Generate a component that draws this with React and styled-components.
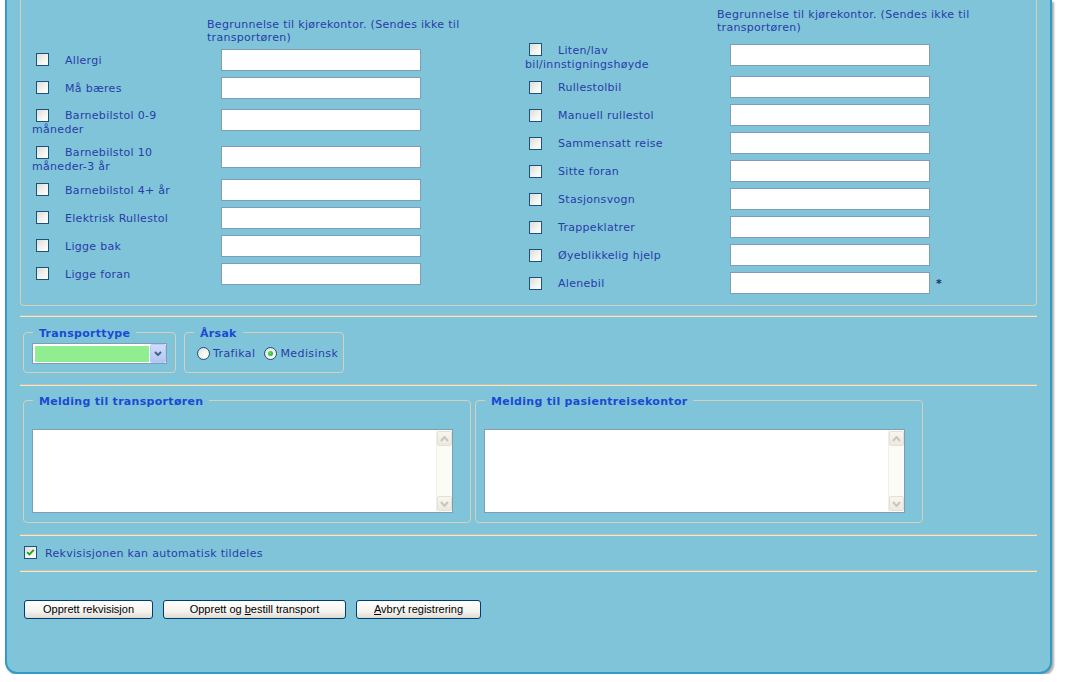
import React from 'react';
import styled, { createGlobalStyle } from 'styled-components';

const Global = createGlobalStyle`
  html, body { margin: 0; padding: 0; background: #ffffff; }
  body { font-family: "DejaVu Sans", Verdana, sans-serif; font-size: 11px; letter-spacing: 0.3px; color: #283ca8; }
`;

const Panel = styled.div`
  box-sizing: border-box;
  margin-left: 5px;
  width: 1047px;
  height: 674px;
  background: #80c4da;
  border: 2px solid #2e9cc6;
  border-top: none;
  border-radius: 0 0 12px 12px;
  box-shadow: 2px 2px 2px rgba(70, 70, 70, 0.45);
  padding: 0 13px;
  display: flex;
  flex-direction: column;
`;

const CriteriaBox = styled.div`
  box-sizing: border-box;
  height: 306px;
  border: 1px solid #d3d0bc;
  border-top: none;
  border-radius: 0 0 4px 4px;
  padding: 8px 0 8px 11px;
  display: flex;
  align-items: center;
`;

const Column = styled.div`
  width: ${p => (p.$w ? `${p.$w}px` : 'auto')};
  flex: ${p => (p.$w ? 'none' : '1')};
  display: grid;
  grid-template-columns: ${p => p.$labelW}px 1fr;
`;

const ColumnHeader = styled.div`
  grid-column: 2;
  height: 28px;
  max-width: 275px;
  line-height: 13px;
  color: #283ca8;
`;

const LabelCell = styled.div`
  height: ${p => (p.$tall ? 37 : 28)}px;
  display: flex;
  align-items: center;
`;

const LabelFlow = styled.div`
  line-height: 14px;
  margin-top: ${p => (p.$tall ? 6 : 2)}px;
  color: #283ca8;
`;

const FieldCell = styled.div`
  height: ${p => (p.$tall ? 37 : 28)}px;
  display: flex;
  align-items: center;
  padding-left: ${p => p.$pad}px;
`;

const TextInput = styled.input`
  box-sizing: border-box;
  width: 200px;
  height: 22px;
  border: 1px solid #7f9db9;
  background: #ffffff;
  padding: 0 3px;
  margin: 0;
  font: 11px "DejaVu Sans", sans-serif;
  outline: none;
`;

const Star = styled.span`
  margin-left: 6px;
  color: #1c2c6a;
  font-size: 11px;
  font-weight: bold;
`;

const Box = styled.span`
  display: inline-flex;
  align-items: center;
  justify-content: center;
  box-sizing: border-box;
  width: 13px;
  height: 13px;
  border: 1px solid #1c5180;
  background: linear-gradient(135deg, #dcdcd6 0%, #f3f3ef 55%, #ffffff 100%);
  vertical-align: middle;
  margin: 0 ${p => p.$mr ?? 16}px 0 ${p => p.$ml ?? 4}px;
  position: relative;
  top: -1px;
`;

const Divider = styled.div`
  flex: none;
  height: 0;
  border-top: 1px solid #c4bfac;
  border-bottom: 1px solid #f3e8ca;
  margin-top: ${p => p.$mt}px;
`;

const GroupRow = styled.div`
  display: flex;
  gap: ${p => p.$gap}px;
  margin: ${p => p.$mt}px 0 0 3px;
`;

const Group = styled.fieldset`
  box-sizing: border-box;
  margin: 0;
  min-width: 0;
  width: ${p => p.$w}px;
  padding: ${p => p.$pt}px 8px ${p => p.$pb}px 8px;
  border: 1px solid #d3d0bc;
  border-radius: 4px;
`;

const GroupTitle = styled.legend`
  margin-left: 1px;
  padding: 0 6px;
  font: bold 11px/13px "DejaVu Sans", sans-serif;
  letter-spacing: 0.3px;
  color: #1b4ad2;
  position: relative;
  top: 1px;
`;

const DropDown = styled.div`
  box-sizing: border-box;
  width: 135px;
  height: 21px;
  border: 1px solid #7f9db9;
  background: #ffffff;
  display: flex;
  align-items: stretch;
`;

const DropValue = styled.div`
  width: 114px;
  margin: 2px 1px 1px 2px;
  background: #90ee90;
`;

const DropArrow = styled.div`
  box-sizing: border-box;
  width: 16px;
  border: 1px solid #b9cbf5;
  border-radius: 2px;
  background: linear-gradient(180deg, #d0ddfc 0%, #bccff9 60%, #afc5f5 100%);
  display: flex;
  align-items: center;
  justify-content: center;
`;

const RadioRow = styled.div`
  height: 21px;
  display: flex;
  align-items: center;
`;

const Radio = styled.span`
  box-sizing: border-box;
  flex: none;
  width: 13px;
  height: 13px;
  border-radius: 50%;
  border: 1px solid #1c5180;
  background: radial-gradient(circle at 70% 70%, #ffffff 0%, #f0f0ec 50%, #d8d8d2 100%);
  margin: 0 3px 0 4px;
  display: flex;
  align-items: center;
  justify-content: center;
`;

const RadioDot = styled.span`
  width: 5px;
  height: 5px;
  border-radius: 50%;
  background: radial-gradient(circle at 40% 40%, #5ee35e, #1fa11f);
`;

const RadioText = styled.span`
  margin-right: 5px;
  font-size: 11px;
  letter-spacing: 0.4px;
  color: #283ca8;
`;

const MemoBox = styled.div`
  box-sizing: border-box;
  width: 421px;
  height: 84px;
  border: 1px solid #7f9db9;
  background: #ffffff;
  display: flex;
`;

const Memo = styled.textarea`
  flex: 1;
  border: none;
  resize: none;
  outline: none;
  margin: 0;
  padding: 2px;
  background: transparent;
  overflow: hidden;
  font: 11px "DejaVu Sans", sans-serif;
`;

const ScrollTrack = styled.div`
  box-sizing: border-box;
  width: 16px;
  background: #fcfcf7;
  border-left: 1px solid #f1f0e8;
  display: flex;
  flex-direction: column;
  justify-content: space-between;
  padding: 1px 0;
`;

const ScrollButton = styled.div`
  box-sizing: border-box;
  width: 15px;
  height: 15px;
  border: 1px solid #e3e1d5;
  border-radius: 2px;
  background: linear-gradient(180deg, #f7f6f1, #ebe9e0);
  display: flex;
  align-items: center;
  justify-content: center;
`;

const AutoRow = styled.div`
  height: 20px;
  margin-top: 7px;
  display: flex;
  align-items: center;
  color: #283ca8;
`;

const ButtonRow = styled.div`
  display: flex;
  gap: 10px;
  margin: 28px 0 0 4px;
`;

const Button = styled.button`
  box-sizing: border-box;
  width: ${p => p.$w}px;
  height: 19px;
  padding: 0;
  border: 1px solid #003c74;
  border-radius: 3px;
  background: linear-gradient(180deg, #ffffff 0%, #f4f3ee 60%, #dedbd2 100%);
  font: 11px/1 "Liberation Sans", Arial, sans-serif;
  letter-spacing: 0;
  color: #000000;
  text-align: center;
`;

const Check = ({ checked, ml, mr }) => (
  <Box $ml={ml} $mr={mr}>
    {checked && (
      <svg width="9" height="9" viewBox="0 0 9 9">
        <path d="M1.2 4.2 L3.4 6.4 L7.8 1.8" fill="none" stroke="#21a121" strokeWidth="1.9" />
      </svg>
    )}
  </Box>
);

const Chevron = ({ up, color, w = 7, h = 4, sw = 2 }) => (
  <svg width={w + 2} height={h + 2} viewBox={`0 0 ${w + 2} ${h + 2}`}>
    <path
      d={up ? `M1 ${h + 1} L${w / 2 + 1} 1 L${w + 1} ${h + 1}` : `M1 1 L${w / 2 + 1} ${h + 1} L${w + 1} 1`}
      fill="none"
      stroke={color}
      strokeWidth={sw}
    />
  </svg>
);

const leftRows = [
  { label: 'Allergi' },
  { label: 'Må bæres' },
  { label: 'Barnebilstol 0-9', second: 'måneder', tall: true },
  { label: 'Barnebilstol 10', second: 'måneder-3 år', tall: true },
  { label: 'Barnebilstol 4+ år' },
  { label: 'Elektrisk Rullestol' },
  { label: 'Ligge bak' },
  { label: 'Ligge foran' },
];

const rightRows = [
  { label: 'Liten/lav', second: 'bil/innstigningshøyde', tall: true },
  { label: 'Rullestolbil' },
  { label: 'Manuell rullestol' },
  { label: 'Sammensatt reise' },
  { label: 'Sitte foran' },
  { label: 'Stasjonsvogn' },
  { label: 'Trappeklatrer' },
  { label: 'Øyeblikkelig hjelp' },
  { label: 'Alenebil', star: true },
];

const CriteriaColumn = ({ rows, w, labelW, pad }) => (
  <Column $w={w} $labelW={labelW}>
    <ColumnHeader>Begrunnelse til kjørekontor. (Sendes ikke til transportøren)</ColumnHeader>
    {rows.map(r => (
      <React.Fragment key={r.label}>
        <LabelCell $tall={r.tall}>
          <LabelFlow $tall={r.tall}>
            <Check />
            {r.label}
            {r.second && (
              <>
                <br />
                {r.second}
              </>
            )}
          </LabelFlow>
        </LabelCell>
        <FieldCell $tall={r.tall} $pad={pad}>
          <TextInput type="text" />
          {r.star && <Star>*</Star>}
        </FieldCell>
      </React.Fragment>
    ))}
  </Column>
);

const MemoField = ({ title }) => (
  <Group $w={448} $pt={22} $pb={9}>
    <GroupTitle>{title}</GroupTitle>
    <MemoBox>
      <Memo />
      <ScrollTrack>
        <ScrollButton>
          <Chevron up color="#c9c7b8" />
        </ScrollButton>
        <ScrollButton>
          <Chevron color="#c9c7b8" />
        </ScrollButton>
      </ScrollTrack>
    </MemoBox>
  </Group>
);

export default function App() {
  return (
    <>
      <Global />
      <Panel>
        <CriteriaBox>
          <CriteriaColumn rows={leftRows} w={493} labelW={175} pad={14} />
          <CriteriaColumn rows={rightRows} labelW={192} pad={13} />
        </CriteriaBox>

        <Divider $mt={9} />

        <GroupRow $gap={8} $mt={9}>
          <Group $w={153} $pt={4} $pb={8}>
            <GroupTitle>Transporttype</GroupTitle>
            <DropDown>
              <DropValue />
              <DropArrow>
                <Chevron color="#4d6185" w={6} h={3} sw={2} />
              </DropArrow>
            </DropDown>
          </Group>
          <Group $w={160} $pt={4} $pb={8}>
            <GroupTitle>Årsak</GroupTitle>
            <RadioRow>
              <Radio />
              <RadioText>Trafikal</RadioText>
              <Radio>
                <RadioDot />
              </Radio>
              <RadioText>Medisinsk</RadioText>
            </RadioRow>
          </Group>
        </GroupRow>

        <Divider $mt={11} />

        <GroupRow $gap={4} $mt={8}>
          <MemoField title="Melding til transportøren" />
          <MemoField title="Melding til pasientreisekontor" />
        </GroupRow>

        <Divider $mt={11} />

        <AutoRow>
          <Check checked ml={4} mr={8} />
          Rekvisisjonen kan automatisk tildeles
        </AutoRow>

        <Divider $mt={7} />

        <ButtonRow>
          <Button $w={129}>Opprett rekvisisjon</Button>
          <Button $w={183}>
            Opprett og <u>b</u>estill transport
          </Button>
          <Button $w={125}>
            <u>A</u>vbryt registrering
          </Button>
        </ButtonRow>
      </Panel>
    </>
  );
}
